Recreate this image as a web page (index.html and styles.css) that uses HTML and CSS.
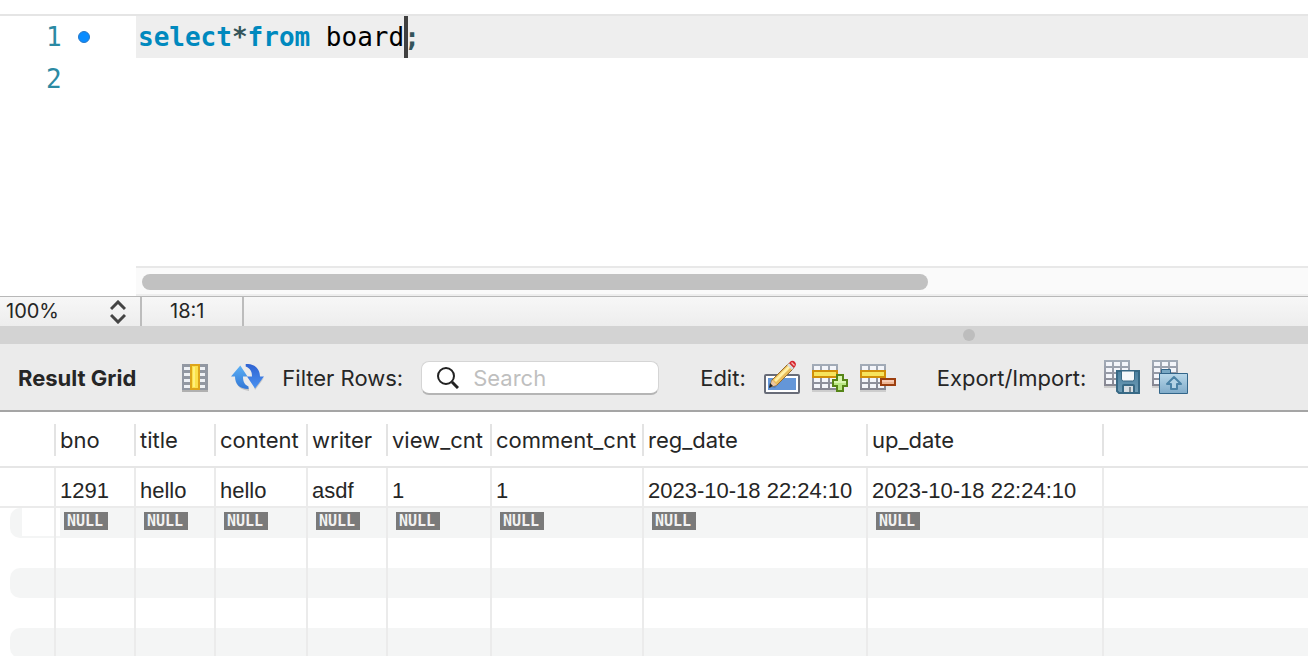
FILE: index.html
```html
<!DOCTYPE html>
<html lang="en">
<head>
    <meta charset="UTF-8">
    <meta name="viewport" content="width=device-width, initial-scale=1.0">
    <title>Query - board</title>
    <link rel="stylesheet" href="styles.css">
</head>
<body>
    <svg class="defs" width="0" height="0" aria-hidden="true">
        <defs>
            <linearGradient id="frame" x1="0" y1="0" x2="0" y2="1">
                <stop offset="0" stop-color="#a3acb8"/>
                <stop offset="1" stop-color="#868691"/>
            </linearGradient>
            <linearGradient id="steel" x1="0" y1="0" x2="0" y2="1">
                <stop offset="0" stop-color="#4a80a0"/>
                <stop offset="1" stop-color="#6f9cb5"/>
            </linearGradient>
            <linearGradient id="folder" x1="0" y1="0" x2="0" y2="1">
                <stop offset="0" stop-color="#b9d8ea"/>
                <stop offset="1" stop-color="#80abc9"/>
            </linearGradient>
            <linearGradient id="up" x1="0" y1="0" x2="0" y2="1">
                <stop offset="0" stop-color="#5bb0f5"/>
                <stop offset="1" stop-color="#3277d6"/>
            </linearGradient>
            <linearGradient id="down" x1="0" y1="0" x2="0" y2="1">
                <stop offset="0" stop-color="#2f62d2"/>
                <stop offset="1" stop-color="#4a92f0"/>
            </linearGradient>
            <symbol id="table" viewBox="0 0 26 28">
                <path fill="#cdcdcd" d="M0 26h26v2H0z"/>
                <path fill="url(#frame)" d="M0 0h26v26H0z"/>
                <path fill="#f3f5fa" d="M2 2h6v4H2zM10 2h6v4h-6zM18 2h6v4h-6zM2 8h6v4H2zM10 8h6v4h-6zM18 8h6v4h-6zM2 14h6v4H2zM10 14h6v4h-6zM18 14h6v4h-6zM2 20h6v4H2zM10 20h6v4h-6zM18 20h6v4h-6z"/>
            </symbol>
        </defs>
    </svg>

    <!-- SQL editor -->
    <section id="editor">
        <div class="line active">
            <div class="gutter"><span class="number">1</span><span class="marker"></span></div>
            <code><span class="keyword">select</span><span class="operator">*</span><span class="keyword">from</span> board<span class="caret"></span><span class="operator">;</span></code>
        </div>
        <div class="line">
            <div class="gutter"><span class="number">2</span></div>
            <code></code>
        </div>
        <div class="scrollbar"><div class="thumb"></div></div>
    </section>

    <div id="status-bar">
        <div class="zoom">
            <select aria-label="Zoom"><option>100%</option></select>
            <svg width="16" height="24" viewBox="0 0 16 24" fill="none" stroke="#444" stroke-width="3"><path d="M1 9l7-7 7 7M1 15l7 7 7-7"/></svg>
        </div>
        <div class="position">18:1</div>
    </div>
    <div id="splitter"><span class="grip"></span></div>

    <!-- Result toolbar -->
    <div id="toolbar">
        <span class="title">Result Grid</span>
        <div class="view-tools">
            <button type="button" aria-label="Columns">
                <svg width="26" height="28" viewBox="0 0 26 28">
                    <path fill="#b0b0b0" d="M0 25h26v3H0z"/>
                    <path fill="#9298a2" d="M0 0h26v26H0z"/>
                    <path fill="#eef1f5" d="M2 3h6v3H2zM2 9h6v3H2zM2 15h6v3H2zM2 21h6v3H2zM18 3h5v3h-5zM18 9h5v3h-5zM18 15h5v3h-5zM18 21h5v3h-5z"/>
                    <path fill="#dea51a" d="M8 0h10v26H8z"/>
                    <path fill="#fbe14b" d="M10 2h6v22h-6z"/>
                    <path fill="#fff07c" d="M11 3h2v20h-2z"/>
                </svg>
            </button>
            <button type="button" aria-label="Refresh">
                <svg width="34" height="28" viewBox="0 0 34 28">
                    <path fill="#c4c4c4" d="M5 18c2 6 7 8 13 9v-3zM24 26l9-12-10 8z"/>
                    <path fill="url(#up)" d="M9.300 1.500L0 12.500h4c0 7 4 12.500 13.500 12.500v-2.500c-3.500-1.500-5.500-4.500-5.500-10h4.500z"/>
                    <path fill="url(#down)" d="M14.700 0c8-.5 14.300 4 14.300 12.500h4L24 24.500l-8-12h5c0-5-1.500-8-6.300-10z"/>
                </svg>
            </button>
        </div>
        <label for="filter">Filter Rows:</label>
        <div class="search">
            <svg width="22" height="22" viewBox="0 0 22 22" fill="none" stroke="#222" stroke-width="2"><circle cx="9" cy="9" r="8"/><path stroke-width="3" d="M15 15l6 6"/></svg>
            <input type="text" id="filter" placeholder="Search">
        </div>
        <span class="group">Edit:</span>
        <div class="tools">
            <button type="button" aria-label="Edit row">
                <svg width="36" height="34" viewBox="0 0 36 34">
                    <rect x="1" y="15" width="34" height="18" rx="1" fill="#fff" stroke="#686c78" stroke-width="2"/>
                    <path fill="#6496d8" d="M4 18h28v12H4z"/>
                    <path fill="#44669a" opacity=".5" d="M7 27l4 1 9-10h-6z"/>
                    <path fill="#e9bd5c" stroke="#946c30" d="M8 20L25 3l5 5-17 17-7 2z"/>
                    <path fill="#fff0a6" d="M10 20L25 5l2 2-15 15z"/>
                    <path fill="#edc7a0" d="M8 20l5 5-7 2z"/>
                    <path fill="#222" d="M6 23l3 3-4 2z"/>
                    <path fill="#d8dade" d="M23 5l2-2 5 5-2 2z"/>
                    <path fill="#d5242c" d="M25 3l2-2q2-1 4 1l1 2q0 2-2 4z"/>
                    <path fill="#f8b4b2" d="M27 3l1-1 3 3-1 1z"/>
                </svg>
            </button>
            <button type="button" aria-label="Insert row">
                <svg width="36" height="34" viewBox="0 0 36 34">
                    <use href="#table" x="0" y="4" width="26" height="28"/>
                    <path fill="#f7e45c" stroke="#d18f08" stroke-width="2" d="M1 11h24v6H1z"/>
                    <path fill="#b9e884" stroke="#568518" stroke-width="2" d="M25 15h6v5h4v6h-4v5h-6v-5h-4v-6h4z"/>
                    <path fill="#d8f6b0" d="M26 16h4v5h4v2H22v-2h4z"/>
                </svg>
            </button>
            <button type="button" aria-label="Delete row">
                <svg width="36" height="34" viewBox="0 0 36 34">
                    <use href="#table" x="0" y="4" width="26" height="28"/>
                    <path fill="#f7e45c" stroke="#d18f08" stroke-width="2" d="M1 11h24v6H1z"/>
                    <path fill="#edb594" stroke="#9c3f10" stroke-width="2" d="M21 19h14v6H21z"/>
                    <path fill="#f6cbb4" d="M22 20h12v2H22z"/>
                </svg>
            </button>
        </div>
        <span class="group">Export/Import:</span>
        <div class="tools">
            <button type="button" aria-label="Export">
                <svg width="36" height="34" viewBox="0 0 36 34">
                    <use href="#table" x="0" y="0" width="26" height="28"/>
                    <path fill="url(#steel)" stroke="#386985" stroke-width="2" d="M13 11h22v22H15l-2-2z"/>
                    <path fill="#f5f8fa" stroke="#386985" d="M17.500 11v8q0 2 2 2h9q2 0 2-2v-8z"/>
                    <path fill="#d7dee3" stroke="#386985" stroke-width="2" d="M19 33v-7q0-1 1-1h9q1 0 1 1v7z"/>
                    <path fill="#7f8c94" d="M25 27h2v5h-2z"/>
                </svg>
            </button>
            <button type="button" aria-label="Import">
                <svg width="36" height="34" viewBox="0 0 36 34">
                    <use href="#table" x="0" y="0" width="26" height="28"/>
                    <path fill="#79a8c4" stroke="#33668a" d="M9.500 14v-4.500h9V14z"/>
                    <path fill="url(#folder)" stroke="#33668a" d="M7.500 13.500h28v20h-28z"/>
                    <path fill="#b3d3e6" stroke="#4a82a6" stroke-width="2" stroke-linejoin="round" d="M22 17l7 7h-4v5h-6v-5h-4z"/>
                </svg>
            </button>
        </div>
    </div>

    <!-- Result grid -->
    <table id="result">
        <colgroup>
            <col class="w-handle"><col class="w-small"><col class="w-small"><col class="w-content"><col class="w-small">
            <col class="w-view"><col class="w-comment"><col class="w-reg"><col class="w-up"><col>
        </colgroup>
        <thead>
            <tr>
                <th><span></span></th>
                <th><span>bno</span></th>
                <th><span>title</span></th>
                <th><span>content</span></th>
                <th><span>writer</span></th>
                <th><span>view_cnt</span></th>
                <th><span>comment_cnt</span></th>
                <th><span>reg_date</span></th>
                <th><span>up_date</span></th>
                <th></th>
            </tr>
        </thead>
        <tbody>
            <tr class="first">
                <td></td><td>1291</td><td>hello</td><td>hello</td><td>asdf</td><td>1</td><td>1</td>
                <td>2023-10-18 22:24:10</td><td>2023-10-18 22:24:10</td><td></td>
            </tr>
            <tr class="new">
                <td><div class="stripe"><div class="handle"></div></div></td>
                <td><span class="null">NULL</span></td>
                <td><span class="null">NULL</span></td>
                <td><span class="null">NULL</span></td>
                <td><span class="null">NULL</span></td>
                <td><span class="null">NULL</span></td>
                <td><span class="null">NULL</span></td>
                <td><span class="null">NULL</span></td>
                <td><span class="null">NULL</span></td>
                <td></td>
            </tr>
            <tr><td></td><td></td><td></td><td></td><td></td><td></td><td></td><td></td><td></td><td></td></tr>
            <tr><td><div class="stripe"></div></td><td></td><td></td><td></td><td></td><td></td><td></td><td></td><td></td><td></td></tr>
            <tr><td></td><td></td><td></td><td></td><td></td><td></td><td></td><td></td><td></td><td></td></tr>
            <tr><td><div class="stripe"></div></td><td></td><td></td><td></td><td></td><td></td><td></td><td></td><td></td><td></td></tr>
        </tbody>
    </table>
</body>
</html>
```
FILE: styles.css
```css
* {
    box-sizing: border-box;
}
body {
    margin: 0;
    height: 100vh;
    overflow: hidden;
    background-color: #fff;
    color: #262626;
    font-family: Inter, 'Liberation Sans', sans-serif;
    font-size: 22px;
}
svg {
    display: block;
}
.defs {
    position: absolute;
}
button {
    padding: 0;
    border: none;
    background: none;
}

/* Editor */
#editor {
    display: flex;
    flex-direction: column;
    height: 282px;
    margin-top: 14px;
    border-top: 2px solid #e5e5e5;
    font-family: 'DejaVu Sans Mono', monospace;
    font-size: 26px;
}
.line {
    display: flex;
    height: 42px;
    line-height: 43px;
}
.gutter {
    display: flex;
    align-items: center;
    flex: none;
    width: 136px;
    padding-left: 46px;
    color: #2b8aa3;
}
.marker {
    width: 12px;
    height: 12px;
    margin-left: 16px;
    border: 1px solid #2878c8;
    border-radius: 50%;
    background-color: #0a8cff;
}
.line code {
    flex: 1;
    padding-left: 2px;
    color: #000;
    font-family: inherit;
    white-space: pre;
}
.line.active code {
    background-color: #eee;
}
.keyword {
    color: #0089be;
    font-weight: bold;
}
.operator {
    color: #34545a;
    font-weight: bold;
}
.caret {
    display: inline-block;
    width: 4px;
    height: 42px;
    margin-right: -4px;
    background-color: #404040;
    vertical-align: top;
}
.scrollbar {
    height: 30px;
    margin-top: auto;
    margin-left: 136px;
    padding: 6px;
    border-top: 2px solid #e8e8e8;
    border-bottom: 2px solid #eee;
    background-color: #fafafa;
}
.thumb {
    width: 786px;
    max-width: 100%;
    height: 16px;
    border-radius: 8px;
    background-color: #c1c1c1;
}

/* Status bar */
#status-bar {
    display: flex;
    height: 30px;
    border-top: 1px solid #b8b8b8;
    background: linear-gradient(#f7f7f7, #ededed);
    font-size: 20px;
    line-height: 29px;
}
.zoom {
    display: flex;
    align-items: center;
    width: 142px;
    padding: 0 14px 0 6px;
    border-right: 2px solid #bcbcbc;
}
.zoom select {
    flex: 1;
    padding: 0;
    border: none;
    background: none;
    color: inherit;
    font: inherit;
    appearance: none;
}
.position {
    width: 102px;
    padding-left: 28px;
    border-right: 2px solid #bcbcbc;
}
#splitter {
    display: flex;
    align-items: center;
    justify-content: flex-end;
    height: 18px;
    padding-right: 333px;
    background-color: #d3d3d3;
}
.grip {
    width: 12px;
    height: 12px;
    border-radius: 50%;
    background-color: #bdbdbd;
}

/* Toolbar */
#toolbar {
    display: flex;
    align-items: center;
    height: 68px;
    padding: 2px 0 0 18px;
    border-bottom: 2px solid #a5a5a5;
    background-color: #ebebeb;
    white-space: nowrap;
}
.title {
    font-weight: bold;
}
.tools,
.view-tools {
    display: flex;
}
.tools {
    gap: 12px;
    margin-left: 18px;
    padding-bottom: 2px;
}
.view-tools {
    gap: 23px;
    margin: 0 17px 0 46px;
}
.search {
    display: flex;
    align-items: center;
    gap: 14px;
    width: 238px;
    height: 34px;
    margin-left: 18px;
    padding: 0 15px;
    border: 1px solid #d5d5d5;
    border-bottom: 2px solid #b5b5b5;
    border-radius: 8px;
    background-color: #fff;
}
.search svg {
    flex: none;
}
.search input {
    flex: 1;
    min-width: 0;
    padding: 0;
    border: none;
    outline: none;
    background: none;
    font: inherit;
}
.search input::placeholder {
    color: #bfbfbf;
}
.group {
    margin-left: 41px;
}

/* Result grid */
#result {
    width: 100%;
    table-layout: fixed;
    border-collapse: separate;
    border-spacing: 0;
    white-space: nowrap;
}
.w-handle { width: 56px; }
.w-small { width: 80px; }
.w-content { width: 92px; }
.w-view { width: 104px; }
.w-comment { width: 152px; }
.w-reg { width: 224px; }
.w-up { width: 236px; }
#result th {
    height: 56px;
    padding: 2px 0 0;
    border-bottom: 2px solid #e6e6e6;
    font-weight: normal;
    text-align: left;
}
#result th span {
    display: block;
    height: 32px;
    padding-left: 4px;
    border-right: 2px solid #e3e3e3;
    line-height: 32px;
}
#result td {
    height: 30px;
    padding: 0 0 0 4px;
    border-right: 2px solid #ebebeb;
    font-family: 'Liberation Sans', sans-serif;
    line-height: 28px;
}
#result td:first-child {
    padding: 0;
}
#result td:last-child {
    border-right: none;
}
#result tr.first td {
    height: 40px;
    padding-top: 8px;
    border-bottom: 2px solid #ebebeb;
}
#result tbody tr:nth-child(even) td:not(:first-child) {
    background-color: #f4f5f5;
}
#result tr.new td:nth-child(2) {
    background-image: linear-gradient(#fff, #fff);
    background-repeat: no-repeat;
    background-size: 4px 28px;
}
.stripe {
    height: 30px;
    margin-left: 10px;
    padding-left: 12px;
    border-radius: 10px 0 0 10px;
    background-color: #f4f5f5;
}
.handle {
    height: 28px;
    background-color: #fff;
}
.null {
    display: block;
    width: 44px;
    height: 18px;
    margin: 0 0 4px 4px;
    padding-left: 3px;
    background-color: #7a7a7a;
    color: #f2f2f2;
    font: bold 15px/18px 'DejaVu Sans Mono', monospace;
}
```
